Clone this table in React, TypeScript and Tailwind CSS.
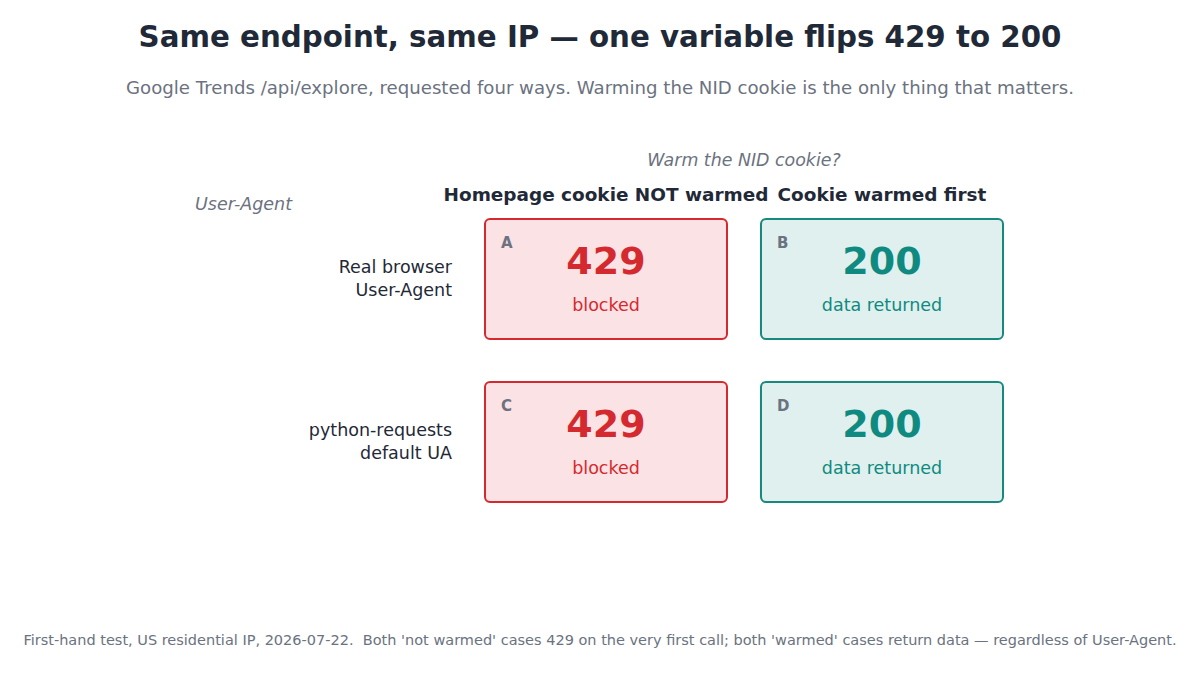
import React from "react";

type Cell = {
  tag: string;
  code: string;
  note: string;
  ok: boolean;
};

const rows: { label: string[]; cells: Cell[] }[] = [
  {
    label: ["Real browser", "User-Agent"],
    cells: [
      { tag: "A", code: "429", note: "blocked", ok: false },
      { tag: "B", code: "200", note: "data returned", ok: true },
    ],
  },
  {
    label: ["python-requests", "default UA"],
    cells: [
      { tag: "C", code: "429", note: "blocked", ok: false },
      { tag: "D", code: "200", note: "data returned", ok: true },
    ],
  },
];

const Box = ({ cell }: { cell: Cell }) => {
  const tone = cell.ok
    ? "border-[#17897f] bg-[#dff0ee] text-[#0f8a80]"
    : "border-[#d42a2f] bg-[#fbe2e4] text-[#d42a2f]";
  return (
    <div
      className={`relative h-[122px] rounded-[6px] border-2 flex flex-col items-center pt-[17px] ${tone}`}
    >
      <span className="absolute top-[15px] left-[15px] text-[15px] leading-4 font-bold text-[#6b7280]">
        {cell.tag}
      </span>
      <span className="text-[38px] leading-[48px] font-bold">{cell.code}</span>
      <span className="mt-[9px] text-[17.5px] leading-[22px]">{cell.note}</span>
    </div>
  );
};

export default function App() {
  return (
    <div
      className="w-[1200px] h-[675px] bg-white flex flex-col text-[#1f2937]"
      style={{ fontFamily: '"DejaVu Sans", "Liberation Sans", sans-serif' }}
    >
      <h1 className="pt-[19px] text-center text-[29.3px] leading-[36px] font-bold">
        Same endpoint, same IP — one variable flips 429 to 200
      </h1>
      <p className="mt-[21px] text-center text-[18.15px] leading-6 text-[#6b7280]">
        Google Trends /api/explore, requested four ways. Warming the NID cookie is the only thing that matters.
      </p>

      <div className="mt-[50px] ml-[182px] grid grid-cols-[270px_244px_244px] gap-x-[32px]">
        <div />
        <div className="col-span-2 flex justify-center text-[17.4px] leading-5 italic text-[#6b7280]">
          Warm the NID cookie?
        </div>

        <div className="mt-[14px] h-[34px] pl-[13px] pt-[10px] text-[17.5px] leading-5 italic text-[#6b7280]">
          User-Agent
        </div>
        <div className="mt-[14px] h-[34px] flex justify-center whitespace-nowrap text-[18.45px] leading-[22px] font-bold">
          Homepage cookie NOT warmed
        </div>
        <div className="mt-[14px] h-[34px] flex justify-center whitespace-nowrap text-[18.45px] leading-[22px] font-bold">
          Cookie warmed first
        </div>

        {rows.map((row, i) => (
          <React.Fragment key={i}>
            <div
              className={`flex flex-col justify-center items-end text-[17.5px] leading-[23px] ${
                i > 0 ? "mt-[41px]" : ""
              }`}
            >
              {row.label.map((l) => (
                <span key={l}>{l}</span>
              ))}
            </div>
            {row.cells.map((c) => (
              <div key={c.tag} className={i > 0 ? "mt-[41px]" : ""}>
                <Box cell={c} />
              </div>
            ))}
          </React.Fragment>
        ))}
      </div>

      <div className="mt-auto mb-[26px] text-center text-[14.5px] leading-[18px] text-[#6b7280] whitespace-pre">
        {"First-hand test, US residential IP, 2026-07-22.  Both 'not warmed' cases 429 on the very first call; both 'warmed' cases return data — regardless of User-Agent."}
      </div>
    </div>
  );
}
